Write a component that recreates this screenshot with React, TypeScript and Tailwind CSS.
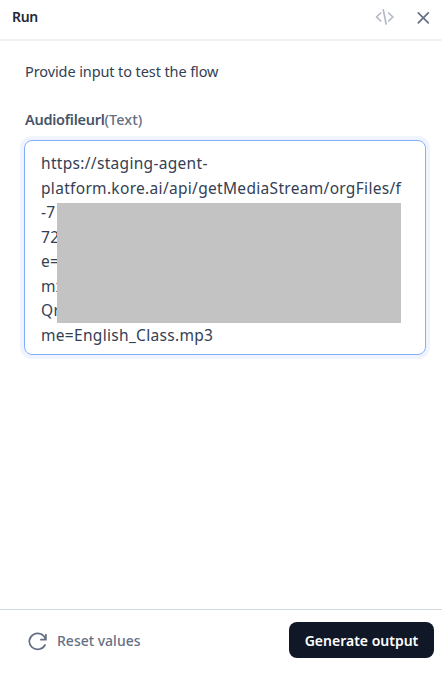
import React from "react";

const urlLines: string[] = [
  "https://staging-agent-",
  "platform.kore.ai/api/getMediaStream/orgFiles/f",
  "-7",
  "72",
  "e=",
  "mx",
  "Qr",
  "me=English_Class.mp3",
];

function CodeIcon() {
  return (
    <svg width="20" height="18" viewBox="0 0 20 18" fill="none" stroke="#b3b9c6" strokeWidth="1.7" strokeLinecap="round" strokeLinejoin="round">
      <path d="M5.7 5 1.5 9l4.2 4M13.7 5 17.9 9l-4.2 4M8.3 1.8l2.8 14.2" />
    </svg>
  );
}

function CloseIcon() {
  return (
    <svg width="14" height="14" viewBox="0 0 14 14" fill="none" stroke="#667085" strokeWidth="1.7" strokeLinecap="round">
      <path d="M2.3 2.8l10 10M12.3 2.8l-10 10" />
    </svg>
  );
}

function ResetIcon() {
  return (
    <svg width="20" height="20" viewBox="0 0 20 20" fill="none" stroke="#667085" strokeWidth="1.7" strokeLinecap="round" strokeLinejoin="round">
      <path d="M18.9 2.7v5h-5M18.7 7.5A8.3 8 0 1 0 18 13" />
    </svg>
  );
}

export default function App() {
  return (
    <main className="flex h-[673px] w-[442px] flex-col overflow-hidden bg-white font-['Noto_Sans','Open_Sans',sans-serif] text-[#344054]">
      <header className="flex h-[41px] shrink-0 items-center border-b-2 border-[#eff1f5] pb-[5px] pl-3 pr-3">
        <h1 className="grow text-[14px] font-semibold leading-5 tracking-[-0.3px] text-[#1d2939]">Run</h1>
        <button aria-label="View code" className="mr-[21px]"><CodeIcon /></button>
        <button aria-label="Close"><CloseIcon /></button>
      </header>
      <section className="flex grow flex-col pl-6 pr-[15px] pt-5">
        <p className="whitespace-nowrap pl-px text-[14.5px] leading-5 tracking-[-0.1px]">Provide input to test the flow</p>
        <div className="mt-[28px] flex whitespace-nowrap pl-px text-[14.5px] leading-5">
          <span className="font-semibold tracking-[-0.28px] text-[#475467]">Audiofileurl</span>
          <span className="font-medium tracking-[0.05px] text-[#667085]">(Text)</span>
        </div>
        <div className="relative mt-[11px] h-[215px] w-[402px] rounded-lg border border-[#84adff] pl-4 pt-[10px] shadow-[0_0_0_4px_#eff4ff]">
          {urlLines.map((line) => (
            <div key={line} className="h-[24.5px] whitespace-nowrap text-[15.5px] leading-[24.5px] tracking-[0.31px]">{line}</div>
          ))}
          <div className="absolute left-8 top-[62px] h-[120px] w-[344px] bg-[#c3c3c3]" />
        </div>
      </section>
      <footer className="flex h-[64px] shrink-0 items-start border-t border-[#d0d8e0] pl-[27px] pr-2 pt-3">
        <button className="flex h-[37px] grow items-center gap-[10px] text-[14px] font-medium text-[#667085]">
          <span className="pt-0.5"><ResetIcon /></span>
          <span>Reset values</span>
        </button>
        <button className="h-9 w-[145px] whitespace-nowrap rounded-lg bg-[#101828] text-[14px] font-semibold text-white">Generate output</button>
      </footer>
    </main>
  );
}
